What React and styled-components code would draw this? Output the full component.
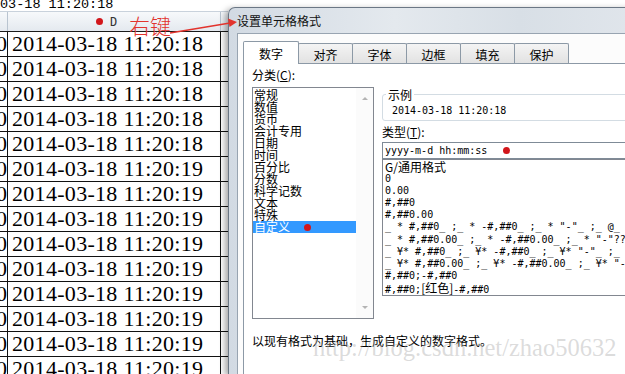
import React from "react";
import styled, { createGlobalStyle } from "styled-components";

const GlobalStyle = createGlobalStyle`
  html, body {
    margin: 0;
    padding: 0;
    background: #fff;
  }
  body {
    font-family: "Noto Sans CJK SC", "Liberation Sans", sans-serif;
    color: #000;
  }
`;

const Page = styled.div`
  position: relative;
  display: flex;
  width: 625px;
  height: 374px;
  overflow: hidden;
  background: #fff;
`;

/* ---------- spreadsheet ---------- */

const Sheet = styled.div`
  flex: 0 0 228px;
  display: flex;
  flex-direction: column;
`;

const FormulaBar = styled.div`
  flex: 0 0 auto;
  height: 11px;
  border-bottom: 1px solid #c9d2dc;
  font: 13.5px/9px "Liberation Mono", monospace;
  white-space: nowrap;
  overflow: hidden;
`;

const HeaderRow = styled.div`
  display: flex;
  height: 19px;
  flex: 0 0 auto;
  border-bottom: 1px solid #1a1a1a;
  background: linear-gradient(180deg, #f7f9fb, #e4e9ef);
`;

const HeaderCell = styled.div`
  display: flex;
  align-items: center;
  width: ${(p) => p.w || "auto"};
  flex: ${(p) => (p.w ? "0 0 auto" : "1")};
  border-right: ${(p) => (p.w ? "1px solid #b9c4d0" : "none")};
  padding-left: ${(p) => p.pad || 0}px;
  box-sizing: content-box;
  font: 12px "DejaVu Sans Mono", monospace;
  color: #333;
`;

const Row = styled.div`
  display: flex;
  height: 24px;
  flex: 0 0 auto;
  border-bottom: 1px solid #111;
`;

const EdgeCell = styled.div`
  width: 7px;
  border-right: 1px solid #111;
  display: flex;
  justify-content: flex-end;
  overflow: hidden;
  font: 22px/24px "Liberation Serif", serif;
`;

const DateCell = styled.div`
  width: 208px;
  padding-left: 4px;
  border-right: 1px solid #111;
  font: 22px/24px "Liberation Serif", serif;
  letter-spacing: 0.3px;
  white-space: nowrap;
  overflow: hidden;
`;

const SpareCell = styled.div`
  flex: 1;
`;

const Dot = styled.span`
  display: inline-block;
  width: 7px;
  height: 7px;
  border-radius: 50%;
  background: #d2161b;
  margin-left: ${(p) => p.ml || 0}px;
  margin-right: ${(p) => p.mr || 0}px;
  vertical-align: middle;
`;

/* ---------- dialog ---------- */

const Dialog = styled.div`
  flex: 1 0 auto;
  margin-top: 7px;
  display: flex;
  flex-direction: column;
  border-top: 1px solid #6b7785;
  border-left: 1px solid #6b7785;
  border-top-left-radius: 7px;
  background: linear-gradient(90deg, #d2dae3, #e4e9ee 40%, #d8dfe6 70%, #e1e6ec);
  box-shadow: -3px 2px 6px rgba(0, 0, 0, 0.35);
`;

const TitleBar = styled.div`
  flex: 0 0 auto;
  height: 25px;
  display: flex;
  align-items: center;
  padding-left: 8px;
  font-size: 12px;
  color: #111;
`;

const Client = styled.div`
  flex: 1;
  display: flex;
  flex-direction: column;
  margin-left: 8px;
  padding: 7px 0 0 5px;
  border-top: 1px solid #98a4b1;
  border-left: 1px solid #98a4b1;
  background: #fcfcfc;
`;

const Tabs = styled.div`
  display: flex;
  flex: 0 0 auto;
  align-items: flex-end;
  height: 22px;
  position: relative;
  z-index: 1;
`;

const Tab = styled.div`
  box-sizing: border-box;
  width: ${(p) => (p.active ? 56 : 55)}px;
  height: ${(p) => (p.active ? 23 : 20)}px;
  margin-left: ${(p) => (p.first ? 0 : -1)}px;
  margin-bottom: ${(p) => (p.active ? -1 : 0)}px;
  border: 1px solid #8c99a6;
  border-bottom: none;
  border-radius: 2px 2px 0 0;
  background: ${(p) =>
    p.active ? "#fff" : "linear-gradient(180deg, #f4f4f4, #e2e2e2)"};
  position: relative;
  z-index: ${(p) => (p.active ? 2 : 1)};
  display: flex;
  align-items: center;
  justify-content: center;
  font-size: 12px;
  padding-top: ${(p) => (p.active ? 0 : 1)}px;
`;

const Panel = styled.div`
  flex: 1;
  border-top: 1px solid #8c99a6;
  border-left: 1px solid #8c99a6;
  background: #fff;
  padding: 4px 0 0 8px;
`;

const Columns = styled.div`
  display: flex;
  align-items: flex-start;
`;

const LeftCol = styled.div`
  width: 122px;
  flex: 0 0 auto;
`;

const Label = styled.div`
  font-size: 12px;
  line-height: 14px;
  margin-top: ${(p) => p.mt || 0}px;
  white-space: nowrap;
`;

const CategoryList = styled.div`
  box-sizing: border-box;
  display: flex;
  width: 122px;
  height: 232px;
  margin-top: 5px;
  border: 1px solid #828790;
`;

const Items = styled.div`
  flex: 1;
  padding-top: 1px;
`;

const Item = styled.div`
  height: 12px;
  font-size: 12px;
  line-height: 12px;
  padding-left: 1px;
  white-space: nowrap;
  background: ${(p) => (p.selected ? "#3399ff" : "transparent")};
  color: ${(p) => (p.selected ? "#fff" : "#000")};
  display: flex;
  align-items: center;
`;

const ScrollBar = styled.div`
  width: 17px;
  display: flex;
  flex-direction: column;
  justify-content: space-between;
  align-items: center;
  padding: 9px 0 9px;
  background: #fbfbfb;
`;

const Arrow = styled.span`
  width: 0;
  height: 0;
  border-left: 3px solid transparent;
  border-right: 3px solid transparent;
  border-${(p) => (p.down ? "top" : "bottom")}: 3px solid #b4b4b4;
`;

const RightCol = styled.div`
  width: 262px;
  flex: 0 0 auto;
  margin-left: 8px;
  padding-top: 20px;
`;

const SampleBox = styled.fieldset`
  margin: 0;
  padding: 0 0 3px 0;
  border: 1px solid #d3dce3;
  border-radius: 3px;
`;

const Legend = styled.legend`
  font-size: 12px;
  line-height: 13px;
  padding: 0 2px;
  margin-left: 3px;
`;

const MonoText = styled.div`
  font: 10px/13px "DejaVu Sans Mono", monospace;
  margin: ${(p) => p.m || "0"};
  white-space: nowrap;
`;

const TypeInput = styled.div`
  box-sizing: border-box;
  height: 17px;
  margin-top: 3px;
  border: 1px solid #7f8b97;
  padding-left: 2px;
  display: flex;
  align-items: center;
  font: 10px "DejaVu Sans Mono", monospace;
  white-space: nowrap;
`;

const FormatList = styled.div`
  box-sizing: border-box;
  height: 137px;
  border: 1px solid #828790;
  padding: 1px 0 0 2px;
  overflow: hidden;
`;

const FormatItem = styled.div`
  height: 12.1px;
  font: 10px/12px "DejaVu Sans Mono", monospace;
  white-space: nowrap;
`;

const Cjk = styled.span`
  font-family: "Noto Sans CJK SC", sans-serif;
  font-size: 12px;
`;

const Hint = styled.div`
  font-size: 12px;
  line-height: 12px;
  margin-top: 16px;
  white-space: nowrap;
`;

/* ---------- overlays ---------- */

const Watermark = styled.div`
  position: absolute;
  left: 313px;
  top: 334px;
  font: 24.5px "Liberation Serif", serif;
  color: rgba(170, 170, 170, 0.42);
  white-space: nowrap;
  pointer-events: none;
`;

const Note = styled.div`
  position: absolute;
  left: 129px;
  top: 13px;
  font-size: 21px;
  line-height: 24px;
  font-weight: 300;
  color: #e2332d;
`;

const NoteArrow = styled.svg`
  position: absolute;
  left: 0;
  top: 0;
  pointer-events: none;
`;

const categories = [
  "常规",
  "数值",
  "货币",
  "会计专用",
  "日期",
  "时间",
  "百分比",
  "分数",
  "科学记数",
  "文本",
  "特殊",
  "自定义",
];

const formats = [
  <><Cjk>G/通用格式</Cjk></>,
  "0",
  "0.00",
  "#,##0",
  "#,##0.00",
  '_ * #,##0_ ;_ * -#,##0_ ;_ * "-"_ ;_ @_ ',
  '_ * #,##0.00_ ;_ * -#,##0.00_ ;_ * "-"??_ ;_ @_ ',
  '_ ¥* #,##0_ ;_ ¥* -#,##0_ ;_ ¥* "-"_ ;_ @_ ',
  '_ ¥* #,##0.00_ ;_ ¥* -#,##0.00_ ;_ ¥* "-"??_ ;_ @_ ',
  "#,##0;-#,##0",
  <>#,##0;<Cjk>[红色]</Cjk>-#,##0</>,
];

const tabs = ["数字", "对齐", "字体", "边框", "填充", "保护"];

const seconds = [18, 18, 18, 18, 18, 19, 19, 19, 19, 19, 19, 19, 19, 19];

const App = () => {
  return (
    <Page>
      <GlobalStyle />
      <Sheet>
        <FormulaBar>03-18 11:20:18</FormulaBar>
        <HeaderRow>
          <HeaderCell w="7px" />
          <HeaderCell w="124px" pad={88}>
            <Dot mr={7} />D
          </HeaderCell>
          <HeaderCell />
        </HeaderRow>
        {seconds.map((s, i) => (
          <Row key={i}>
            <EdgeCell>0</EdgeCell>
            <DateCell>{`2014-03-18 11:20:${s}`}</DateCell>
            <SpareCell />
          </Row>
        ))}
      </Sheet>

      <Dialog>
        <TitleBar>设置单元格格式</TitleBar>
        <Client>
          <Tabs>
            {tabs.map((t, i) => (
              <Tab key={t} active={i === 0} first={i === 0}>
                {t}
              </Tab>
            ))}
          </Tabs>
          <Panel>
            <Columns>
              <LeftCol>
                <Label>
                  分类(<u>C</u>):
                </Label>
                <CategoryList>
                  <Items>
                    {categories.map((c, i) => (
                      <Item key={c} selected={i === categories.length - 1}>
                        {c}
                        {i === categories.length - 1 && <Dot ml={14} />}
                      </Item>
                    ))}
                  </Items>
                  <ScrollBar>
                    <Arrow />
                    <Arrow down />
                  </ScrollBar>
                </CategoryList>
              </LeftCol>
              <RightCol>
                <SampleBox>
                  <Legend>示例</Legend>
                  <MonoText m="3px 0 0 9px">2014-03-18 11:20:18</MonoText>
                </SampleBox>
                <Label mt={4}>
                  类型(<u>T</u>):
                </Label>
                <TypeInput>
                  yyyy-m-d hh:mm:ss
                  <Dot ml={16} />
                </TypeInput>
                <FormatList>
                  {formats.map((f, i) => (
                    <FormatItem key={i}>{f}</FormatItem>
                  ))}
                </FormatList>
              </RightCol>
            </Columns>
            <Hint>以现有格式为基础，生成自定义的数字格式。</Hint>
          </Panel>
        </Client>
      </Dialog>

      <Note>右键</Note>
      <NoteArrow width="240" height="40" viewBox="0 0 240 40">
        <line x1="170" y1="33" x2="230" y2="23" stroke="#e2332d" strokeWidth="1.3" />
        <polygon points="237,22 228,18.5 229.5,27" fill="#e2332d" />
      </NoteArrow>
      <Watermark>http://blog.csdn.net/zhao50632</Watermark>
    </Page>
  );
};

export default App;
